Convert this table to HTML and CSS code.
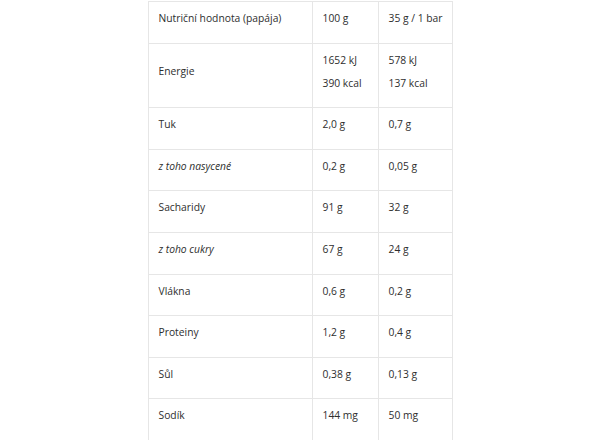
FILE: index.html
```html
<!DOCTYPE html>
<html lang="cs">
<head>
<meta charset="utf-8">
<title>Nutriční hodnota</title>
<link rel="stylesheet" href="styles.css">
</head>
<body>
<table class="nutri">
  <colgroup>
    <col class="c1"><col class="c2"><col class="c3">
  </colgroup>
  <tbody>
    <tr><td>Nutriční hodnota (papája)</td><td>100 g</td><td>35 g / 1 bar</td></tr>
    <tr class="energy"><td>Energie</td><td><div class="l">1652 kJ</div><div class="l l2">390 kcal</div></td><td><div class="l">578 kJ</div><div class="l l2">137 kcal</div></td></tr>
    <tr><td>Tuk</td><td>2,0 g</td><td>0,7 g</td></tr>
    <tr><td><em>z toho nasycené</em></td><td>0,2 g</td><td>0,05 g</td></tr>
    <tr><td>Sacharidy</td><td>91 g</td><td>32 g</td></tr>
    <tr><td><em>z toho cukry</em></td><td>67 g</td><td>24 g</td></tr>
    <tr><td>Vlákna</td><td>0,6 g</td><td>0,2 g</td></tr>
    <tr><td>Proteiny</td><td>1,2 g</td><td>0,4 g</td></tr>
    <tr><td>Sůl</td><td>0,38 g</td><td>0,13 g</td></tr>
    <tr><td>Sodík</td><td>144 mg</td><td>50 mg</td></tr>
  </tbody>
</table>
</body>
</html>
```
FILE: styles.css
```css
html, body {
  margin: 0;
  padding: 0;
  background: #ffffff;
}
body {
  font-family: "Open Sans", "Liberation Sans", sans-serif;
  font-size: 10.3px;
  color: #2e2e2e;
  padding-top: 1px;
}
.nutri {
  border-collapse: collapse;
  width: 304px;
  margin: 0 auto;
  table-layout: fixed;
}
.c1 { width: 164px; }
.c2 { width: 66px; }
.c3 { width: 74px; }
.nutri td {
  border: 1px solid #e6e6e6;
  padding: 6px 9px 14px 10px;
  line-height: 20.6px;
  vertical-align: middle;
  white-space: nowrap;
}
.nutri em {
  font-style: italic;
}
.l2 {
  margin-top: 2.4px;
}
```
